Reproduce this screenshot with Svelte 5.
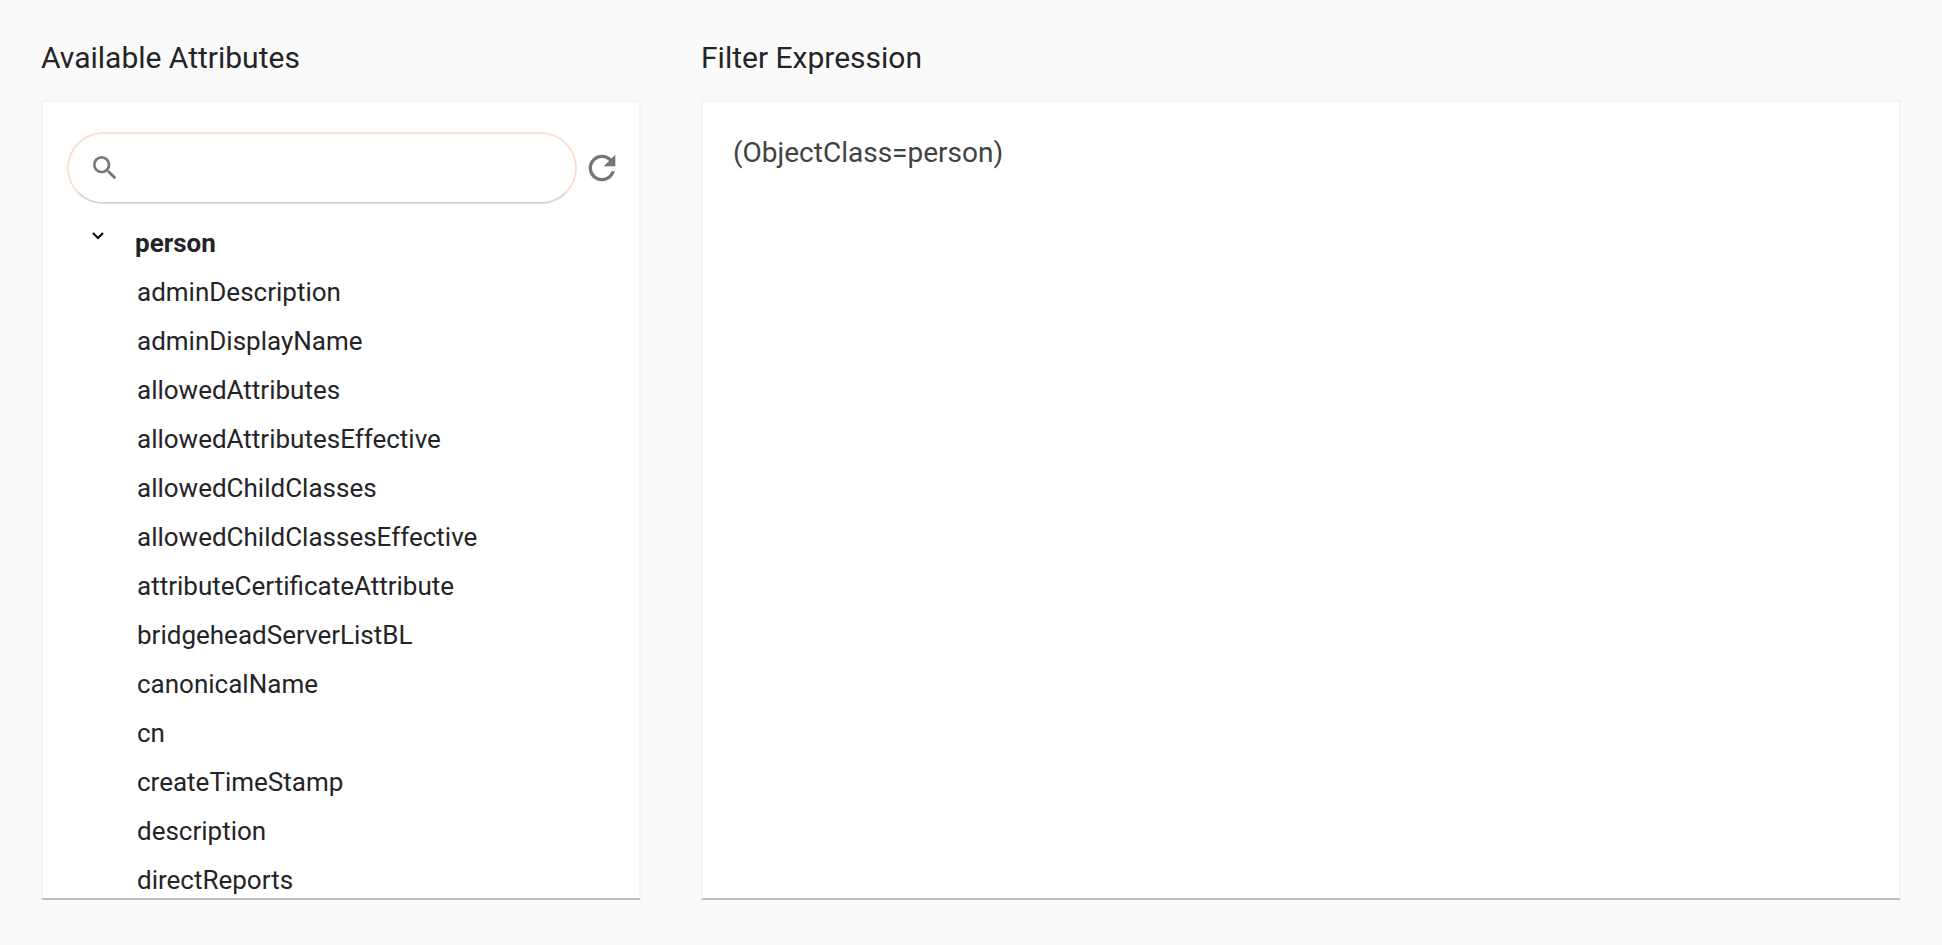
<script>
  let search = $state('');
  let expanded = $state(true);
  let expression = $state('(ObjectClass=person)');

  const attributes = [
    'adminDescription',
    'adminDisplayName',
    'allowedAttributes',
    'allowedAttributesEffective',
    'allowedChildClasses',
    'allowedChildClassesEffective',
    'attributeCertificateAttribute',
    'bridgeheadServerListBL',
    'canonicalName',
    'cn',
    'createTimeStamp',
    'description',
    'directReports'
  ];

  let visible = $derived(
    attributes.filter((name) => name.toLowerCase().includes(search.toLowerCase()))
  );
</script>

<main class="filter-builder">
  <section class="column">
    <h2>Available Attributes</h2>
    <div class="panel attributes">
      <div class="search-row">
        <label class="search">
          <svg class="search-icon" viewBox="0 0 24 24" aria-hidden="true">
            <path d="M15.5 14h-.79l-.28-.27A6.47 6.47 0 0 0 16 9.5 6.5 6.5 0 1 0 9.5 16c1.61 0 3.09-.59 4.23-1.57l.27.28v.79l5 4.99L20.49 19l-4.99-5zm-6 0C7.01 14 5 11.99 5 9.5S7.01 5 9.5 5 14 7.01 14 9.5 11.99 14 9.5 14z" />
          </svg>
          <input type="text" aria-label="Search attributes" bind:value={search} />
        </label>
        <button class="refresh" aria-label="Refresh" onclick={() => (search = '')}>
          <svg viewBox="0 0 24 24" aria-hidden="true">
            <path d="M17.65 6.35A7.958 7.958 0 0 0 12 4c-4.42 0-7.99 3.58-7.99 8s3.57 8 7.99 8c3.73 0 6.84-2.55 7.73-6h-2.08A5.99 5.99 0 0 1 12 18c-3.31 0-6-2.69-6-6s2.69-6 6-6c1.66 0 3.14.69 4.22 1.78L13 11h7V4l-2.35 2.35z" />
          </svg>
        </button>
      </div>

      <button class="class-name" aria-expanded={expanded} onclick={() => (expanded = !expanded)}>
        <svg class="chevron" class:closed={!expanded} viewBox="0 0 12 8" aria-hidden="true">
          <path d="M1 1l5 5 5-5" />
        </svg>
        <span>person</span>
      </button>
      {#if expanded}
        <ul>
          {#each visible as name (name)}
            <li>{name}</li>
          {/each}
        </ul>
      {/if}
    </div>
  </section>

  <section class="column">
    <h2><label for="expression">Filter Expression</label></h2>
    <textarea id="expression" class="panel expression" spellcheck="false" bind:value={expression}></textarea>
  </section>
</main>

<style>
  :global(body) {
    margin: 0;
    background: #fafafa;
  }

  .filter-builder {
    box-sizing: border-box;
    height: 100vh;
    padding: 40px 41px 45px;
    display: grid;
    grid-template-columns: minmax(0, 1fr) minmax(0, 2fr);
    gap: 60px;
    font-family: Roboto, sans-serif;
    color: #242428;
  }

  .column {
    display: flex;
    flex-direction: column;
    min-height: 0;
  }

  h2 {
    margin: 0 0 24px;
    font-size: 30px;
    line-height: 36px;
    font-weight: 400;
  }

  .panel {
    box-sizing: border-box;
    flex: 1;
    min-height: 0;
    background: #fff;
    border: 2px solid #f4f4f6;
    border-bottom-color: #bcbcc4;
  }

  .attributes {
    padding: 30px 17px 0 24px;
    overflow-y: auto;
    scrollbar-width: none;
  }

  .search-row {
    display: flex;
    align-items: center;
    gap: 5px;
    margin-bottom: 15px;
  }

  .search {
    box-sizing: border-box;
    flex: 1;
    min-width: 0;
    height: 72px;
    padding: 0 20px;
    display: flex;
    align-items: center;
    gap: 12px;
    border: 2px solid #fadfd3;
    border-bottom-color: #d8d8d8;
    border-radius: 36px;
  }

  .search-icon {
    flex: none;
    width: 32px;
    height: 32px;
    fill: #757575;
  }

  .search input {
    flex: 1;
    min-width: 0;
    padding: 0;
    border: none;
    outline: none;
    background: none;
    font: inherit;
    font-size: 26px;
    color: inherit;
  }

  button {
    padding: 0;
    border: none;
    background: none;
    font: inherit;
    color: inherit;
    cursor: pointer;
  }

  .refresh {
    width: 40px;
    height: 40px;
  }

  .refresh svg {
    display: block;
    fill: #757575;
  }

  .class-name {
    width: 100%;
    padding-left: 25px;
    display: flex;
    align-items: flex-start;
    gap: 31px;
    font-size: 26px;
    line-height: 49px;
    font-weight: 700;
  }

  .chevron {
    width: 12px;
    height: 8px;
    margin-top: 13px;
    fill: none;
    stroke: #000;
    stroke-width: 2;
  }

  .closed {
    transform: rotate(-90deg);
  }

  ul {
    margin: 0;
    padding: 0 0 0 70px;
    list-style: none;
  }

  li {
    font-size: 26px;
    line-height: 49px;
  }

  .expression {
    width: 100%;
    padding: 30px;
    resize: none;
    outline: none;
    font-family: inherit;
    font-size: 28px;
    line-height: 42px;
    color: #424242;
  }
</style>
